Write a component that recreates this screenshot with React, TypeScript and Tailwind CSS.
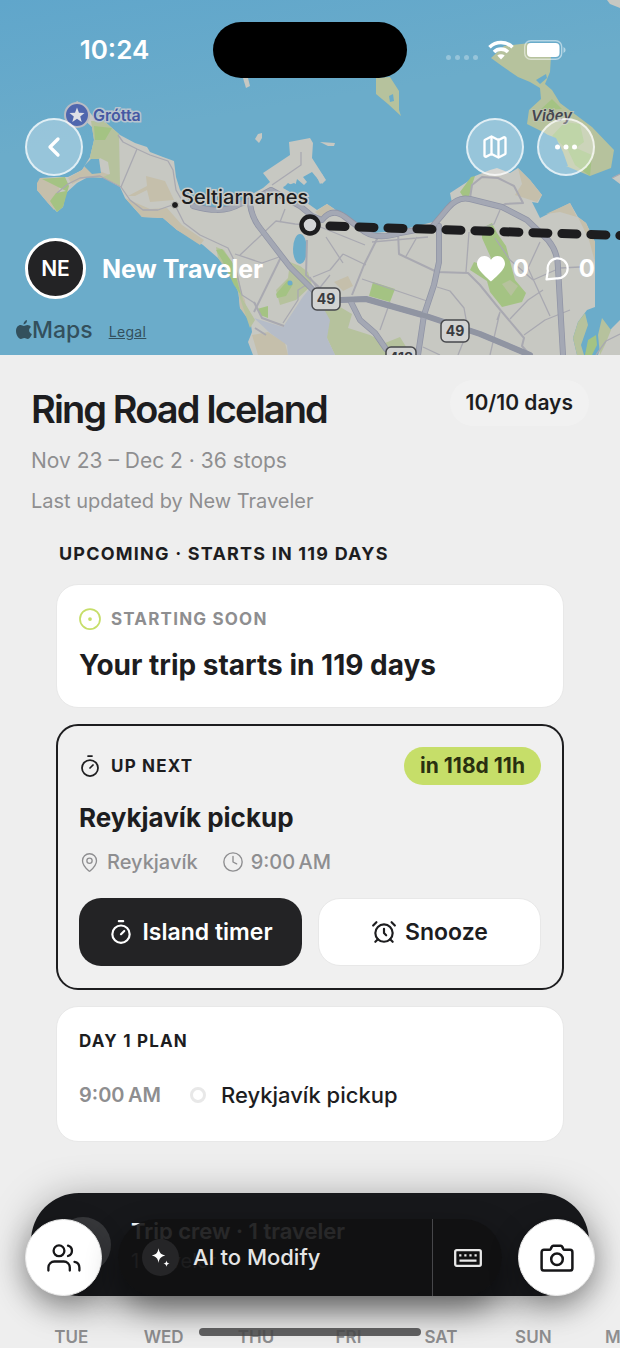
import React from 'react';
import { AlarmClock, ChevronLeft, CircleDot, Clock, Map, MapPin, Timer } from 'lucide-react';

const WEEK_DAYS = ['TUE', 'WED', 'THU', 'FRI', 'SAT', 'SUN', 'MON'];

const WifiIcon = () => (
  <svg width="26" height="20" viewBox="0 0 26 20" fill="none" stroke="#fff" strokeWidth="3.6" aria-hidden="true">
    <path d="M1.5 7.2a16.5 16.5 0 0 1 23 0" />
    <path d="M6 12a10 10 0 0 1 14 0" />
    <path d="M13 19.5 9.3 15.6a5.4 5.4 0 0 1 7.4 0Z" fill="#fff" stroke="none" />
  </svg>
);

const BatteryIcon = () => (
  <svg width="42" height="20" viewBox="0 0 42 20" aria-hidden="true">
    <rect x="0.7" y="0.7" width="37" height="18.6" rx="6" fill="none" stroke="#fff" strokeOpacity="0.5" strokeWidth="1.4" />
    <rect x="3" y="3" width="32.5" height="14" rx="4" fill="#fff" />
    <path d="M39.5 7a3.2 3.2 0 0 1 0 6Z" fill="#fff" fillOpacity="0.5" />
  </svg>
);

const AppleIcon = () => (
  <svg width="16" height="20" viewBox="0 0 16 20" fill="#33505d" aria-hidden="true">
    <path d="M11 0c.2 2.300-1.400 4.400-3.500 4.600C7.300 2.500 9 .4 11 0Z" />
    <path d="M7.900 5.900c.8 0 1.900-1 3.500-1 1.500 0 2.900.8 3.600 2-2.800 1.700-2.400 5.700.9 7-.8 2.300-2.300 5-4.100 5-1.400 0-1.900-.9-3.500-.9s-2.200.9-3.400.9C2.700 18.900 0 15.200 0 11 0 7.200 2.300 5 4.600 5c1.400 0 2.500.9 3.300.9Z" />
  </svg>
);

const HeartIcon = () => (
  <svg width="28" height="26" viewBox="0 0 28 26" fill="#fff" aria-hidden="true">
    <path d="M14 25.500C12 23.500 0 14.500 0 7.800 0 3.400 3.200 0 7.400 0 10.200 0 12.700 1.500 14 3.800 15.300 1.500 17.800 0 20.600 0 24.800 0 28 3.400 28 7.800 28 14.500 16 23.500 14 25.500Z" />
  </svg>
);

const BubbleIcon = () => (
  <svg width="24" height="24" viewBox="0 0 24 24" fill="none" stroke="#fff" strokeWidth="2.200" strokeLinejoin="round" aria-hidden="true">
    <path d="M1.500 22.300 2.900 13.600a10 10 0 1 1 8.600 7.700Z" />
  </svg>
);

const SparkleIcon = () => (
  <svg width="22" height="22" viewBox="0 0 18 18" fill="#fff" aria-hidden="true">
    <path d="M7 1c.7 3.700 1.800 5 5.500 6-3.700 1-4.800 2.300-5.500 6-.7-3.700-1.800-5-5.500-6C5.200 6 6.300 4.700 7 1Z" />
    <path d="M13.500 11c.3 1.600.9 2.200 2.500 2.600-1.600.4-2.200 1-2.500 2.600-.3-1.600-.9-2.200-2.500-2.600 1.600-.4 2.200-1 2.500-2.600Z" />
  </svg>
);

const PeopleIcon = () => (
  <svg width="34" height="28" viewBox="0 0 34 28" fill="none" stroke="#161618" strokeWidth="2.300" strokeLinecap="round" aria-hidden="true">
    <circle cx="12" cy="6.800" r="5.400" />
    <path d="M1.400 26.500v-3a6 6 0 0 1 6-6h9.400a6 6 0 0 1 6 6v3" />
    <path d="M21 1.600a5.400 5.400 0 0 1 0 10.400" />
    <path d="M27.500 17.800a6 6 0 0 1 4.900 5.900v2.800" />
  </svg>
);

const KeyboardIcon = () => (
  <svg width="28" height="18" viewBox="0 0 28 18" fill="none" stroke="#e8e8e8" strokeWidth="2.300" aria-hidden="true">
    <rect x="1.200" y="1.200" width="25.600" height="15.600" rx="1.500" />
    <path d="M5.200 6.300h2.200M10.300 6.300h2.200M15.400 6.300h2.200M20.500 6.300h2.200M5.500 11.600h17" />
  </svg>
);

const CameraIcon = () => (
  <svg width="34" height="28" viewBox="0 0 34 28" fill="none" stroke="#161618" strokeWidth="2.500" strokeLinejoin="round" aria-hidden="true">
    <path d="M4 5.800h5.300c.9 0 1.200-.4 1.600-1.200l.8-1.700c.3-.7.8-1.100 1.600-1.100h7.400c.8 0 1.300.4 1.600 1.100l.8 1.700c.4.800.7 1.200 1.600 1.200H30c1.400 0 2.400 1 2.400 2.400v16c0 1.400-1 2.400-2.400 2.400H4c-1.400 0-2.400-1-2.400-2.400v-16c0-1.400 1-2.400 2.400-2.400Z" />
    <circle cx="17" cy="15.300" r="5.800" />
  </svg>
);

interface ShieldProps {
  x: number;
  y: number;
  label: string;
  wide?: boolean;
}

// Road number plate
const Shield: React.FC<ShieldProps> = ({ x, y, label, wide = false }) => {
  const half = wide ? 15 : 14;
  return (
    <g>
      <rect x={x - half} y={y - 11} width={half * 2} height="22" rx="5" fill="#d2d3d2" stroke="#47484c" strokeWidth="1.500" />
      <text x={x} y={y + 5} textAnchor="middle" fontSize="14" fontWeight="700" fill="#3a3b40">
        {label}
      </text>
    </g>
  );
};

const TripMap = () => (
  <svg
    className="absolute inset-0 h-full w-full font-['Inter',sans-serif]"
    viewBox="0 0 620 355"
    preserveAspectRatio="xMidYMid slice"
    role="img"
    aria-label="Map of Reykjavík"
  >
    <defs>
      <linearGradient id="sea" x1="0" y1="0" x2="0.3" y2="1">
        <stop offset="0" stopColor="#60a6cb" />
        <stop offset="0.4" stopColor="#6bacca" />
        <stop offset="1" stopColor="#6bacca" />
      </linearGradient>
    </defs>
    <rect width="620" height="355" fill="url(#sea)" />

    {/* Land */}
    <g fill="#c7c8c2">
      <path d="M71 108 77 101 85 106 95 119 104 121 112 128 120 135 135 143 147 147 150 152 163 157 174 161 176 177 180 190 193 205 213 208 230 207 247 197 263 188 270 182 263 173 290 155 289 142 310 138 313 143 312 158 326 180 322 184 312 172 303 177 307 182 304 185 297 179 295 187 288 183 283 188 292 193 303 200 317 210 327 204 333 208 343 215 360 228 373 233 397 231 437 221 448 210 452 203 450 193 467 182 475 176 490 170 497 168 510 173 518 168 530 180 542 195 538 203 532 202 540 218 570 203 578 217 586 223 595 242 595 307 587 310 578 322 573 338 577 355H253L248 342 252 332 250 318 240 308 238 288 230 272 218 258 203 245 190 237 177 230 163 218 142 217 125 198 120 187 103 177 88 177 77 183 66 193 63 207 57 212 48 203 37 190 40 178 57 177 68 177 82 170 90 157 94 140 92 127Z" />
      <path d="M598 355 604 338 612 328 620 320V355Z" />
      <path d="M255 139 258 134 262 133 262 138 259 143Z" />
      <path d="M320 142 335 143 334 146 328 146Z" />
      <path d="M243 78 248 78 250 86 246 88Z" />
      <path d="M316 175 322 174 325 180 320 184Z" />
      <path d="M607 0 620 0V8L610 4Z" />
      <path d="M612 178 620 174V184Z" />
    </g>

    {/* Beaches and fields */}
    <g fill="#c5bfab">
      <path d="M37 183 40 178 58 178 60 195 54 210 48 203 37 190Z" />
      <path d="M82 170 90 160 96 170 110 175 104 178 86 177 72 184 68 178Z" />
      <path d="M146 176 165 181 174 200 150 202 147 190 135 196 128 196 147 186Z" />
      <path d="M125 198 150 209 167 208 182 225 204 240 200 245 177 230 163 218 142 217Z" />
      <path d="M315 212 327 204 334 209 322 218Z" />
      <path d="M518 168 530 180 542 195 537 202 515 195 522 184Z" />
      <path d="M546 214 570 203 577 217 560 212Z" />
      <path d="M218 258 232 275 245 300 247 318 240 308 238 288Z" />
      <path d="M334 282 348 276 353 286 343 291Z" />
      <path d="M252 335 268 332 285 343 288 355H258Z" />
      <path d="M578 217 586 223 595 242 595 262 589 240Z" />
    </g>

    {/* Parks */}
    <g fill="#b6c29d">
      <path d="M91 121 104 121 119 134 120 186 103 177 110 174 108 162 100 158 92 168 90 157 94 140Z" />
      <path d="M376 78 390 77 399 91 399 110 401 116 388 104 376 94Z" />
      <path d="M491 58 504 46 530 43 551 56 550 72 545 84 552 90 560 103 592 127 614 150 611 168 590 176 566 166 560 146 545 133 527 124 529 110 541 99 540 88 530 82 518 77 502 66Z" />
      <path d="M216 247 224 250 237 270 243 300 255 320 250 328 238 292 230 272 218 258Z" />
      <path d="M323 308 335 304 352 314 348 328 370 335 385 343 400 337 408 350 408 355H335L327 338Z" />
      <path d="M290 262 300 266 308 272 312 285 296 300 280 305 276 290 288 278Z" />
      <path d="M578 322 585 313 588 325 581 345 584 355H577L573 338Z" />
      <path d="M602 318 611 330 605 345 600 355 598 335Z" />
    </g>
    <g fill="#a4c383">
      <path d="M94 126 112 128 105 140 95 140Z" />
      <path d="M42 179 65 177 69 186 63 207 57 212 50 201 56 193 66 191Z" />
      <path d="M216 250 222 249 232 262 238 284 241 295 234 285 222 260Z" />
      <path d="M276 294 288 280 293 284 286 296 277 298Z" />
      <path d="M257 309 268 306 268 318 260 315Z" />
      <path d="M460 192 471 177 475 176 472 185 469 197 464 198Z" />
      <path d="M482 228 492 223 497 233 506 246 515 280 526 293 522 302 502 307 490 292 487 281 470 270 474 262 486 266 491 258 482 238Z" />
      <path d="M373 282 395 289 390 302 369 296Z" />
      <path d="M540 110 552 99 562 109 541 110Z" />
      <path d="M552 136 565 122 580 124 584 142 576 148 592 155 590 176 575 165 568 150Z" />
      <path d="M588 340 596 335 597 345 592 355H585Z" />
    </g>
    <path d="M502 284 510 280 518 286 511 296Z" fill="#b6c29d" />

    {/* Airfield */}
    <path d="M254 318 283 327 302 298 310 288 320 302 330 320 327 338 335 355H288L287 345 270 333Z" fill="#b5bcc8" />

    {/* Lakes */}
    <g fill="#6bacca">
      <ellipse cx="300" cy="249" rx="7" ry="15" />
      <path d="M84 166 91 159 99 159 101 173 92 174Z" />
      <path d="M283 187 294 183 306 190 307 200 292 193Z" />
      <path d="M536 80 546 74 547 78 540 84Z" />
      <path d="M389 96 393 94 394 101 390 102Z" />
      <path d="M543 133 556 138 563 152 568 166 545 170Z" />
      <circle cx="290" cy="283" r="2.500" />
    </g>

    {/* Minor roads */}
    <g fill="none" stroke="#a9a9b1" strokeWidth="1.300" strokeLinejoin="round">
      <path d="M118 135 123 142 137 149 150 155 168 161 173 170 176 190 184 204" />
      <path d="M137 149 121 187 130 200 143 210 158 210 175 204" />
      <path d="M57 193 68 184 80 178 100 176 121 187" />
      <path d="M176 207 184 223 200 235 228 248 233 258 242 295 256 304" />
      <path d="M240 255 276 221 295 224 310 225" />
      <path d="M235 254 262 263 282 256" />
      <path d="M285 209 280 222M301 152V165L272 185" />
      <path d="M307 240 306 275 322 290" strokeWidth="2" />
      <path d="M254 302 262 318 284 326 M255 328 266 335" strokeWidth="2" />
      <path d="M254 312 281 257" strokeWidth="2" />
      <path d="M283 323 298 300 298 290 306 285" />
      <path d="M378 237 364 265 352 295M398 232 399 254 437 272 468 273 480 285 497 306 524 338 522 346 530 355" strokeWidth="2" />
      <path d="M318 226 365 245M326 237 343 263M343 254 366 265M343 254 330 270 313 277M372 242 428 237M417 237 405 258" />
      <path d="M310 277 318 290 330 275M362 279 430 302M390 302 380 330M437 287 450 291 464 308 468 330 458 355" />
      <path d="M469 232 466 272M482 228 494 224 500 210M495 238 510 260 533 280M540 242 528 268 550 316M533 280 560 268 580 267" />
      <path d="M470 198 472 185 482 177 498 178 514 186 523 203 505 204 500 207" strokeWidth="2" />
      <path d="M500 312 490 355M500 312 497 320M510 319 528 300 543 290M524 335 545 320 570 310M423 347 440 355" />
      <path d="M612 178 620 174M596 355 606 341 620 334" />
    </g>

    {/* Main roads */}
    <g fill="none" strokeLinejoin="round" strokeLinecap="round">
      <g stroke="#9094a5" strokeWidth="6">
        <path d="M193 206C208 210 225 213 240 204L256 198 271 190 300 206 312 216 322 220Q332 207 345 217L365 232Q378 240 400 233L432 227 448 208Q458 196 470 199L502 207 527 220 548 240Q558 252 558 268L563 355" />
        <path d="M250 204Q252 218 260 228L290 267 314 291" />
        <path d="M439 226 439 262 434 285 424 315 418 355" />
        <path d="M341 300 366 299 426 316 480 334 530 355" />
        <path d="M351 302 360 320 375 333 386 349" />
      </g>
      <g stroke="#a4a8b4" strokeWidth="4.500">
        <path d="M193 206C208 210 225 213 240 204L256 198 271 190 300 206 312 216 322 220Q332 207 345 217L365 232Q378 240 400 233L432 227 448 208Q458 196 470 199L502 207 527 220 548 240Q558 252 558 268L563 355" />
        <path d="M250 204Q252 218 260 228L290 267 314 291" />
        <path d="M439 226 439 262 434 285 424 315 418 355" />
        <path d="M351 302 360 320 375 333 386 349" />
      </g>
      <path d="M341 300 366 299 426 316 480 334 530 355" stroke="#9095a2" strokeWidth="5" />
    </g>

    <Shield x={326} y={299} label="49" />
    <Shield x={455} y={331} label="49" />
    <Shield x={401} y={358} label="418" wide />

    {/* Route */}
    <path d="M330 226 620 235.500" stroke="#1d1d1f" strokeWidth="9" strokeLinecap="round" strokeDasharray="15 14" fill="none" />
    <circle cx="310" cy="225" r="8.500" fill="#d3d4d6" stroke="#1d1d1f" strokeWidth="4.500" />

    {/* Places */}
    <circle cx="77" cy="115" r="12" fill="#4f66ae" stroke="#b9bcc4" strokeWidth="2" />
    <path d="M77 107.500 79 112.800 84.500 113 80.200 116.500 81.700 122 77 118.800 72.300 122 73.800 116.500 69.500 113 75 112.800Z" fill="#dfe0e6" />
    <text x="93" y="121" fontSize="16" fontWeight="600" fill="#4558a3" stroke="#b9c4cf" strokeWidth="3" paintOrder="stroke">
      Grótta
    </text>
    <circle cx="175" cy="205" r="3.500" fill="#1d1d1f" stroke="#c7c8c2" />
    <text x="181" y="204" fontSize="20" fontWeight="500" fill="#1d1d1f" stroke="#c9cbc8" strokeWidth="3" paintOrder="stroke">
      Seltjarnarnes
    </text>
    <text x="531" y="121" fontSize="15" fontWeight="600" fontStyle="italic" fill="#45464f" stroke="#bcc4ae" strokeWidth="2" paintOrder="stroke">
      Viðey
    </text>
  </svg>
);

interface RoundButtonProps {
  label: string;
  children: React.ReactNode;
}

const RoundButton: React.FC<RoundButtonProps> = ({ label, children }) => (
  <button
    type="button"
    aria-label={label}
    className="flex size-[58px] items-center justify-center rounded-full border-2 border-white/70 bg-white/30 text-white"
  >
    {children}
  </button>
);

const MapHeader = () => (
  <header className="relative overflow-hidden text-white">
    <TripMap />
    <div className="relative">
      {/* Status bar */}
      <div className="flex items-center pt-[22px]">
        <div className="flex-1 pl-4 text-center text-[26px] leading-8 font-semibold">10:24</div>
        <div className="h-14 w-[194px] rounded-full bg-black" />
        <div className="flex flex-1 items-center justify-center gap-2.5 pr-4">
          <div className="flex gap-1 pt-3.5">
            {[0, 1, 2, 3].map((dot) => (
              <span key={dot} className="size-[5px] rounded-full bg-white/30" />
            ))}
          </div>
          <WifiIcon />
          <BatteryIcon />
        </div>
      </div>

      <div className="mt-10 flex items-center px-[25px]">
        <RoundButton label="Back">
          <ChevronLeft size={32} strokeWidth={2.5} />
        </RoundButton>
        <div className="ml-auto flex gap-[13px]">
          <RoundButton label="Open map">
            <Map size={28} strokeWidth={2} />
          </RoundButton>
          <RoundButton label="More options">
            <svg width="24" height="6" viewBox="0 0 24 6" fill="currentColor" aria-hidden="true">
              <circle cx="3.500" cy="3" r="2.500" />
              <circle cx="12" cy="3" r="2.500" />
              <circle cx="20.500" cy="3" r="2.500" />
            </svg>
          </RoundButton>
        </div>
      </div>

      <div className="mt-[62px] flex items-center px-[25px]">
        <div className="flex size-[61px] items-center justify-center rounded-full border-3 border-white bg-[#232325] text-[21px] font-semibold">
          NE
        </div>
        <span className="ml-4 text-[25px] leading-8 font-bold">New Traveler</span>
        <div className="ml-auto flex items-center text-[24px] leading-8 font-bold">
          <button type="button" aria-label="Likes" className="flex items-center gap-2">
            <HeartIcon />0
          </button>
          <button type="button" aria-label="Comments" className="ml-4 flex items-center gap-2.5">
            <BubbleIcon />0
          </button>
        </div>
      </div>

      <div className="mt-[17px] flex items-center px-4 pb-[11px] text-[#33505d]">
        <AppleIcon />
        <span className="text-[23px] leading-7 font-medium">Maps</span>
        <a href="#legal" className="ml-4 pt-1 text-[14px] leading-5 tracking-wide underline">
          Legal
        </a>
      </div>
    </div>
  </header>
);

const UpNextCard = () => (
  <section className="rounded-[22px] border-2 border-[#1d1d1f] bg-[#f0f0f0] px-[21px] pt-[21px] pb-[22px]">
    <div className="flex items-center">
      <Timer size={24} strokeWidth={1.75} className="-ml-px" />
      <h3 className="ml-[9px] text-[17px] leading-6 font-bold tracking-[1.200px]">UP NEXT</h3>
      <span className="ml-auto rounded-full bg-[#c6de69] px-4 py-[5px] text-[21px] leading-7 font-bold text-[#2a3010]">
        in 118d 11h
      </span>
    </div>
    <h2 className="mt-[15px] text-[26px] leading-9 font-bold">Reykjavík pickup</h2>
    <div className="mt-3 flex items-center text-[20px] leading-7 font-medium text-[#8e8e90]">
      <MapPin size={21} strokeWidth={1.5} />
      <span className="ml-[7px]">Reykjavík</span>
      <Clock size={22} strokeWidth={1.5} className="ml-6" />
      <span className="ml-[7px]">9:00{'\u202f'}AM</span>
    </div>
    <div className="mt-[22px] grid grid-cols-2 gap-4 text-[23px] leading-7 font-semibold">
      <button type="button" className="flex h-[68px] items-center justify-center gap-2 rounded-[22px] bg-[#232325] text-white">
        <Timer size={26} strokeWidth={2} />
        Island timer
      </button>
      <button type="button" className="flex h-[68px] items-center justify-center gap-2 rounded-[22px] border border-[#e8e8e8] bg-white">
        <AlarmClock size={26} strokeWidth={2} />
        Snooze
      </button>
    </div>
  </section>
);

const BottomDock = () => (
  <div className="relative mx-[25px] mt-[51px]">
    <section className="mx-[6px] flex h-[103px] items-center overflow-hidden rounded-[48px] bg-[#17181b] pl-6 shadow-[0_6px_40px_rgba(0,0,0,0.35)]">
      <div className="size-14 rounded-full bg-[#37383b]" />
      <div className="ml-5">
        <p className="text-[22px] leading-8 font-semibold text-white">Trip crew · 1 traveler</p>
        <p className="text-[20px] leading-7 text-[#8e8e90]">1 traveler</p>
      </div>
    </section>

    <div className="absolute inset-x-0 bottom-0 flex items-center justify-between gap-4">
      <button
        type="button"
        aria-label="Crew"
        className="flex size-[77px] shrink-0 items-center justify-center rounded-full border border-[#e8e8e8] bg-white shadow-[0_10px_30px_rgba(0,0,0,0.3)]"
      >
        <PeopleIcon />
      </button>
      <div className="flex h-[77px] flex-1 items-stretch rounded-full bg-[#111112]/90 text-[#e5e5e5] shadow-[0_14px_32px_rgba(0,0,0,0.45)]">
        <button type="button" className="flex flex-1 items-center gap-3.5 pl-6 text-[22px] font-medium">
          <span className="flex size-[37px] items-center justify-center rounded-full bg-[#252527]">
            <SparkleIcon />
          </span>
          AI to Modify
        </button>
        <button type="button" aria-label="Keyboard" className="flex w-[70px] items-center border-l border-[#47474a] pl-[21px]">
          <KeyboardIcon />
        </button>
      </div>
      <button
        type="button"
        aria-label="Camera"
        className="flex size-[77px] shrink-0 items-center justify-center rounded-full border border-[#e8e8e8] bg-white shadow-[0_10px_30px_rgba(0,0,0,0.3)]"
      >
        <CameraIcon />
      </button>
    </div>
  </div>
);

const App: React.FC = () => (
  <div className="relative overflow-hidden bg-[#eeeeee] font-['Inter','Liberation_Sans',sans-serif] text-[#1d1d1f]">
    <MapHeader />

    <main>
      <div className="px-[31px] pt-8">
        <div className="flex items-start justify-between">
          <h1 className="text-[38px] leading-11 font-semibold tracking-tighter">Ring Road Iceland</h1>
          <span className="-mt-[7px] rounded-full bg-[#f1f1f1] px-4 py-2 text-[21px] leading-[30px] font-semibold">
            10/10 days
          </span>
        </div>
        <p className="mt-4 text-[21px] leading-7 text-[#8e8e90]">Nov 23 – Dec 2 · 36 stops</p>
        <p className="mt-3 text-[20px] leading-7 text-[#8e8e90]">Last updated by New Traveler</p>
      </div>

      <div className="mt-[27px] px-14">
        <h2 className="pl-[3px] text-[18px] leading-6 font-bold tracking-[1.200px]">UPCOMING · STARTS IN 119 DAYS</h2>
        <div className="mt-[18px] flex flex-col gap-4">
          <section className="rounded-[22px] border border-[#e8e8e8] bg-white px-[22px] pt-[22px] pb-6">
            <div className="flex items-center">
              <CircleDot size={24} strokeWidth={1.75} className="-ml-px text-[#c6de69]" />
              <h3 className="ml-[9px] text-[17px] leading-6 font-bold tracking-[1.200px] text-[#8e8e90]">STARTING SOON</h3>
            </div>
            <p className="mt-4 text-[28px] leading-9 font-bold">Your trip starts in 119 days</p>
          </section>

          <UpNextCard />

          <section className="rounded-[22px] border border-[#e8e8e8] bg-white px-[22px] pt-[22px] pb-8">
            <h3 className="text-[17px] leading-6 font-bold tracking-[1.200px]">DAY 1 PLAN</h3>
            <div className="mt-7 flex items-center">
              <span className="w-[111px] text-[20px] leading-7 font-semibold text-[#8e8e90]">9:00{'\u202f'}AM</span>
              <span className="size-4 rounded-full border-3 border-[#e8e8e8]" />
              <span className="ml-[15px] text-[22px] leading-7 font-medium">Reykjavík pickup</span>
            </div>
          </section>
        </div>
      </div>
    </main>

    <BottomDock />

    <div className="mt-[31px] -mr-[52px] ml-[25px] grid grid-cols-7 pb-px text-center text-[17px] leading-5 font-semibold text-[#8e8e90]">
      {WEEK_DAYS.map((day) => (
        <span key={day}>{day}</span>
      ))}
    </div>

    {/* Home indicator */}
    <div className="absolute bottom-3 left-1/2 h-2 w-[222px] -translate-x-1/2 rounded-full bg-[#454547]/85" />
  </div>
);

export default App;
